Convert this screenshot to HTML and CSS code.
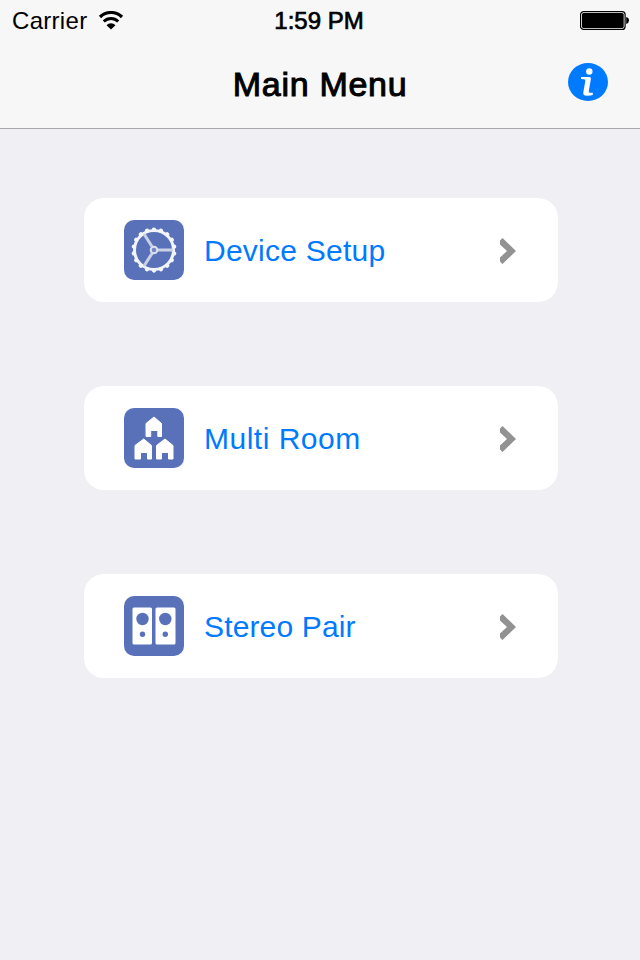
FILE: index.html
```
<!DOCTYPE html>
<html lang="en">
<head>
<meta charset="utf-8">
<title>Main Menu</title>
<link rel="stylesheet" href="styles.css">
</head>
<body>
<header class="top">
  <div class="status">
    <div class="carrier"><span class="carrier-name">Carrier</span>
      <svg class="wifi" width="26" height="20" viewBox="0 0 26 20"><path d="M2 6a15.700 15.700 0 0 1 22 0" fill="none" stroke="#000" stroke-width="3.200"/><path d="M5.800 10.500a10.200 10.200 0 0 1 14.400 0" fill="none" stroke="#000" stroke-width="3"/><path d="M8.500 14.200a6.200 6.200 0 0 1 9 0L13 18.600z"/></svg>
    </div>
    <div class="time">1:59 PM</div>
    <svg class="battery" width="50" height="20" viewBox="0 0 50 20"><rect x=".6" y=".6" width="44.500" height="17.800" rx="3" fill="#fff" stroke="#000" stroke-width="1.200"/><rect x="2" y="2" width="41.700" height="15" rx="1.500"/><path d="M46.200 6q2.800.8 2.800 3.500T46.200 13z"/></svg>
  </div>
  <div class="navbar">
    <h1 class="title">Main Menu</h1>
    <svg class="info" width="40" height="38" viewBox="0 0 40 38"><ellipse cx="20" cy="19" rx="20" ry="19" fill="#007aff"/><circle cx="21.300" cy="8.500" r="3.200" fill="#fff"/><path d="M13 14h8.500q1.600 0 1.400 2L20.800 28q-.3 1.800 1 1.800h3v2.200q-2 .8-6 .8-4 0-3.500-3.300L17.300 18q.2-1.500-1.300-1.700l-3-.3z" fill="#fff"/></svg>
  </div>
</header>
<main class="menu">
  <a class="item">
    <svg class="icon" width="60" height="60" viewBox="0 0 60 60"><rect width="60" height="60" rx="10" fill="#5971b8"/><circle cx="30" cy="30" r="19.500" fill="none" stroke="#f0f3fa" stroke-width="3"/><circle cx="30" cy="30" r="20.500" fill="none" stroke="#f4f6fb" stroke-width="4.200" stroke-linecap="round" pathLength="90" stroke-dasharray=".01 4.990" stroke-dashoffset="2.500"/><g stroke="#c9d1e8" stroke-width="3"><path d="M34 30h15M28 26.500 20 14M28 33.500 20 46"/></g><circle cx="30" cy="30" r="3.300" fill="#7488c4" stroke="#dce2f1" stroke-width="2"/></svg>
    <span class="label setup">Device Setup</span>
    <svg class="chevron" width="17" height="26" viewBox="0 0 17 26"><path d="M1 2.500 3.500 0 17 13 3.500 26 1 23.500V19.500L8 13 1 6.500z" fill="#929292"/></svg>
  </a>
  <a class="item">
    <svg class="icon" width="60" height="60" viewBox="0 0 60 60"><rect width="60" height="60" rx="10" fill="#5971b8"/><g fill="#fff" stroke="#fff" stroke-width="1" stroke-linejoin="round"><path d="M30 9 37.500 15.500V28.500H33.800V22.500H26.700V28.500H22V15.500z"/><path d="M19.700 31 27.500 37.500V51H23.500V44.500H16.500V51H11V37.500z"/><path d="M41 31 49 37.500V51H44.500V44.500H37.500V51H32.500V37.500z"/></g></svg>
    <span class="label room">Multi Room</span>
    <svg class="chevron" width="17" height="26" viewBox="0 0 17 26"><path d="M1 2.500 3.500 0 17 13 3.500 26 1 23.500V19.500L8 13 1 6.500z" fill="#929292"/></svg>
  </a>
  <a class="item">
    <svg class="icon" width="60" height="60" viewBox="0 0 60 60"><rect width="60" height="60" rx="10" fill="#5971b8"/><rect x="8.500" y="11.500" width="19.500" height="37" rx="1.500" fill="#fff"/><rect x="31.500" y="11.500" width="20" height="37" rx="1.500" fill="#fff"/><g fill="#5971b8"><circle cx="18.500" cy="23" r="6.200"/><circle cx="41.300" cy="23" r="6.200"/><circle cx="18.500" cy="38.300" r="2.700"/><circle cx="41.300" cy="38.300" r="2.700"/></g></svg>
    <span class="label pair">Stereo Pair</span>
    <svg class="chevron" width="17" height="26" viewBox="0 0 17 26"><path d="M1 2.500 3.500 0 17 13 3.500 26 1 23.500V19.500L8 13 1 6.500z" fill="#929292"/></svg>
  </a>
</main>
</body>
</html>
```
FILE: styles.css
```
* { box-sizing: border-box; }
body {
  margin: 0;
  min-height: 960px;
  background: #efeff4;
  color: #000;
  font-family: "Liberation Sans", Arial, sans-serif;
}
svg { display: block; flex: none; }
.top {
  height: 129px;
  background: #f7f7f7;
  border-bottom: 1px solid #a7a7ab;
}
.status {
  display: grid;
  grid-template-columns: 1fr auto 1fr;
  align-items: center;
  height: 40px;
  padding: 0 10px 0 12px;
}
.carrier {
  display: flex;
  align-items: center;
  gap: 9.5px;
  font-size: 24px;
  line-height: 40px;
}
.carrier-name { width: 76px; letter-spacing: 0.3px; padding-top: 1px; }
.time {
  font-size: 24px;
  line-height: 40px;
  padding-top: 1px;
  margin-left: -4px;
  -webkit-text-stroke: 0.7px #000;
}
.battery { justify-self: end; }
.navbar {
  display: grid;
  grid-template-columns: 1fr auto 1fr;
  height: 88px;
  padding: 0 32px;
  align-items: center;
}
.title {
  grid-column: 2;
  margin: 0;
  font-size: 34px;
  font-weight: 400;
  line-height: 40px;
  letter-spacing: 0.7px;
  -webkit-text-stroke: 1px #000;
}
.battery { margin-top: 1px; }
.info { justify-self: end; margin-bottom: 4px; }
.menu {
  display: flex;
  flex-direction: column;
  gap: 84px;
  padding: 69px 82px 0 84px;
}
.item {
  display: flex;
  align-items: center;
  height: 104px;
  padding: 0 42px 0 40px;
  border-radius: 20px;
  background: #fff;
}
.label {
  flex: 1;
  margin-left: 20px;
  color: #007aff;
  font-size: 30px;
  line-height: 40px;
  padding-top: 2px;
  white-space: nowrap;
}
.setup { letter-spacing: 0.25px; }
.room { letter-spacing: 0.5px; }
.pair { letter-spacing: 0.15px; }
.chevron { margin-top: 2px; }
```
